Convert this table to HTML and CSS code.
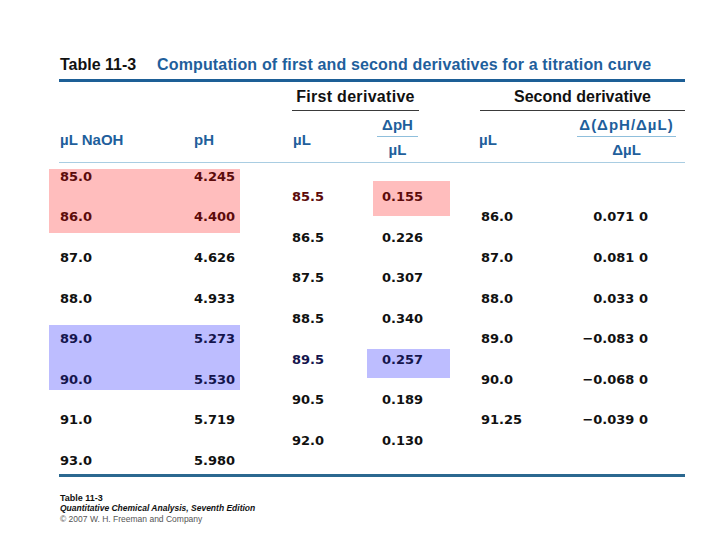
FILE: index.html
```html
<!DOCTYPE html>
<html lang="en">
<head>
<meta charset="utf-8">
<title>Table 11-3</title>
<link rel="stylesheet" href="styles.css">
</head>
<body>
<div class="sheet">
  <h1 class="title"><span class="num">Table 11-3</span><span class="cap">Computation of first and second derivatives for a titration curve</span></h1>

  <div class="head1 cols">
    <div class="grp grp1">First derivative</div>
    <div class="grp grp2">Second derivative</div>
  </div>

  <div class="head2 cols">
    <div class="lbl c1">µL NaOH</div>
    <div class="lbl c2">pH</div>
    <div class="lbl c3">µL</div>
    <div class="frac f4"><div class="num-t">ΔpH</div><div class="den">µL</div></div>
    <div class="lbl c5">µL</div>
    <div class="frac f6"><div class="num-t wide">Δ(ΔpH/ΔµL)</div><div class="den">ΔµL</div></div>
  </div>

  <div class="body">
    <div class="blk left">
      <div class="hl pink pink1">
        <div class="row"><span>85.0</span><span>4.245</span></div>
        <div class="row"><span>86.0</span><span>4.400</span></div>
      </div>
      <div class="row"><span>87.0</span><span>4.626</span></div>
      <div class="row"><span>88.0</span><span>4.933</span></div>
      <div class="hl blue blue1">
        <div class="row"><span>89.0</span><span>5.273</span></div>
        <div class="row"><span>90.0</span><span>5.530</span></div>
      </div>
      <div class="row"><span>91.0</span><span>5.719</span></div>
      <div class="row"><span>93.0</span><span>5.980</span></div>
    </div>

    <div class="blk mid">
      <div class="hl pink pink2">
        <div class="row"><span>85.5</span><span>0.155</span></div>
      </div>
      <div class="row"><span>86.5</span><span>0.226</span></div>
      <div class="row"><span>87.5</span><span>0.307</span></div>
      <div class="row"><span>88.5</span><span>0.340</span></div>
      <div class="hl blue blue2">
        <div class="row"><span>89.5</span><span>0.257</span></div>
      </div>
      <div class="row"><span>90.5</span><span>0.189</span></div>
      <div class="row"><span>92.0</span><span>0.130</span></div>
    </div>

    <div class="blk right">
      <div class="row"><span>86.0</span><span>0.071 0</span></div>
      <div class="row"><span>87.0</span><span>0.081 0</span></div>
      <div class="row"><span>88.0</span><span>0.033 0</span></div>
      <div class="row"><span>89.0</span><span>−0.083 0</span></div>
      <div class="row"><span>90.0</span><span>−0.068 0</span></div>
      <div class="row"><span>91.25</span><span>−0.039 0</span></div>
    </div>
  </div>

  <div class="foot">
    <div class="f1">Table 11-3</div>
    <div class="f2">Quantitative Chemical Analysis, Seventh Edition</div>
    <div class="f3">© 2007 W. H. Freeman and Company</div>
  </div>
</div>
</body>
</html>
```

FILE: styles.css
```css
html, body {
  margin: 0;
  padding: 0;
  background: #ffffff;
}

.sheet {
  margin-left: 59px;
  width: 626px;
  padding-top: 55px;
  font-family: "Liberation Sans", Arial, sans-serif;
  color: #111;
}

.title {
  margin: 0;
  display: flex;
  height: 20px;
  line-height: 20px;
  font-size: 16px;
  font-weight: bold;
  padding-left: 1px;
  white-space: nowrap;
}

.title .num {
  width: 97px;
  color: #111;
}

.title .cap {
  color: #1f5f9c;
  letter-spacing: 0.15px;
}

.cols {
  display: grid;
  grid-template-columns: 135px 98px 85px 102px 98px 108px;
}

.head1 {
  margin-top: 4px;
  border-top: 3px solid #1d5f96;
  height: 29px;
  box-sizing: content-box;
}

.grp {
  padding-top: 6px;
  padding-bottom: 4px;
  line-height: 18px;
  font-size: 16px;
  font-weight: bold;
  color: #111;
  text-align: center;
  border-bottom: 1px solid #3a3a3a;
  align-self: start;
}

.grp1 {
  grid-column: 3 / 5;
  width: 127px;
  justify-self: start;
  letter-spacing: 0.3px;
}

.grp2 {
  grid-column: 5 / 7;
  margin-left: 1px;
}

.head2 {
  height: 51px;
  border-bottom: 1px solid #a9cde2;
  font-size: 15px;
  font-weight: bold;
  color: #1f5f9c;
}

.lbl {
  padding-top: 20px;
  line-height: 18px;
}

.c1 { padding-left: 1px; }
.c3 { padding-left: 1px; }

.frac {
  padding-top: 5px;
  justify-self: start;
  text-align: center;
}

.f4 { width: 41px; }
.f6 { width: 99px; }

.num-t {
  line-height: 18px;
  padding-bottom: 2px;
  border-bottom: 1px solid #8fbfdc;
}

.num-t.wide {
  letter-spacing: 1px;
}

.den {
  padding-top: 4px;
  line-height: 18px;
}

.body {
  display: grid;
  grid-template-columns: 233px 187px 206px;
  padding-top: 3.85px;
  padding-bottom: 2.65px;
  font-family: "DejaVu Sans", Verdana, sans-serif;
  font-weight: bold;
  font-size: 13px;
  color: #111;
}

.blk,
.hl {
  display: flex;
  flex-direction: column;
  gap: 20.3px;
}

.mid { padding-top: 20.3px; }
.right { padding-top: 40.6px; }

.row {
  display: grid;
  height: 20.3px;
  line-height: 20.3px;
  white-space: nowrap;
}

.left .row { grid-template-columns: 135px 98px; }
.left .row span:first-child { padding-left: 1px; }

.mid .row { grid-template-columns: 85px 102px; }
.mid .row span:last-child { padding-left: 5px; }

.right .row { grid-template-columns: 98px 108px; }
.right .row span:first-child { padding-left: 2px; }
.right .row span:last-child { text-align: right; padding-right: 37px; }

.hl {
  position: relative;
  isolation: isolate;
}

.hl::before {
  content: "";
  position: absolute;
  z-index: -1;
}

.pink::before { background: #ffbdbd; }
.blue::before { background: #bdbdff; }
.pink .row { color: #5c0b0b; }
.blue .row { color: #15154d; }

.pink1::before { top: 2.15px; bottom: -5.25px; left: -10px; right: 52px; }
.blue1::before { top: -4.25px; bottom: 0; left: -10px; right: 52px; }
.pink2::before { top: -6px; bottom: -8.5px; left: 81px; right: 29px; }
.blue2::before { top: -0.5px; bottom: -8px; left: 75px; right: 29px; }

.foot {
  border-top: 3px solid #2b6890;
  padding-top: 15.75px;
  font-size: 9px;
  line-height: 10.5px;
}

.f1 {
  font-weight: bold;
  color: #111;
  padding-left: 1px;
}

.f2 {
  font-weight: bold;
  font-style: italic;
  font-size: 8.5px;
  color: #111;
  padding-left: 1px;
}

.f3 {
  font-size: 8.5px;
  color: #555;
  padding-left: 1px;
}
```
